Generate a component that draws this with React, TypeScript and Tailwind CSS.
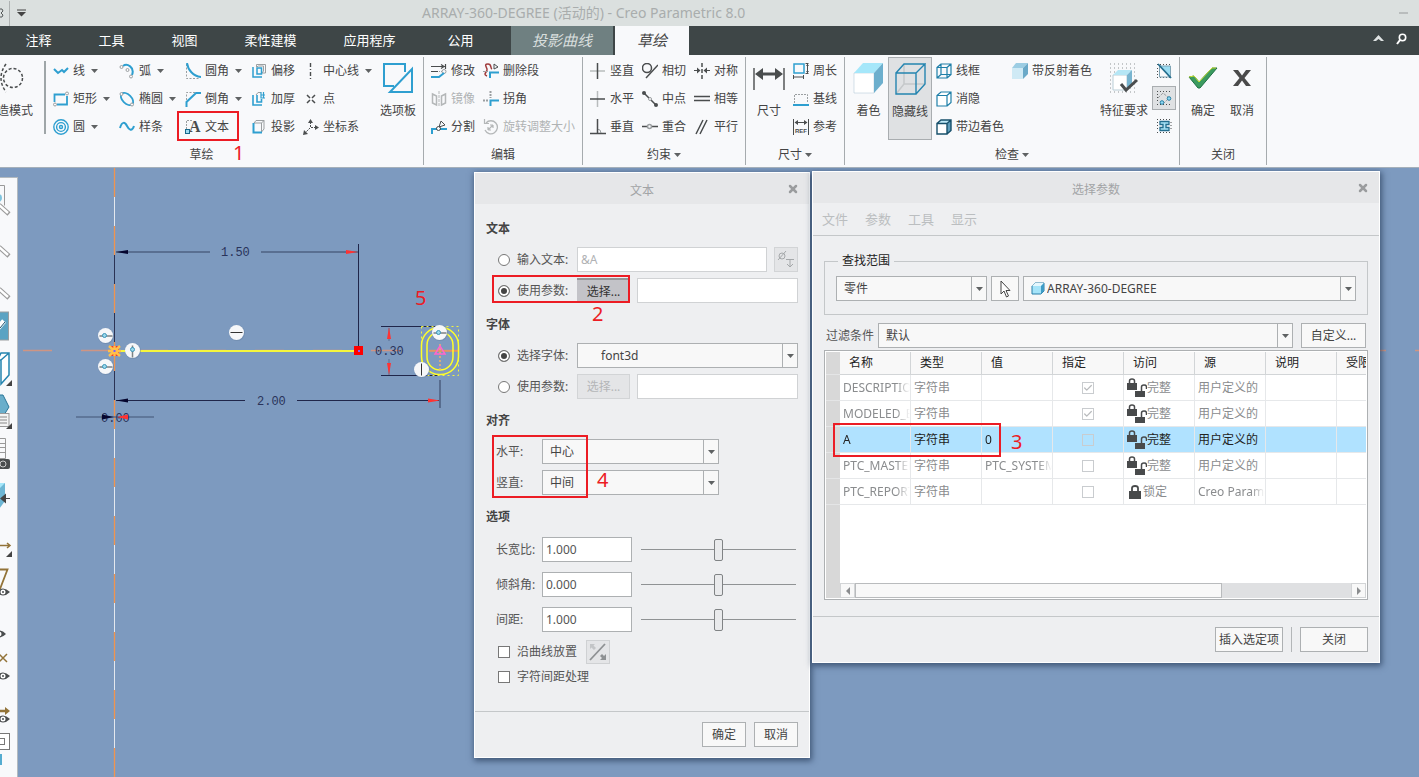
import React, { useState } from "react";
import { Check, X } from "lucide-react";

const BLUE = "#2e9fd0";
const GREY = "#9b9fa1";
const DARK = "#4a4d4e";

type IconProps = { children: React.ReactNode; w?: number; h?: number };

function Svg({ children, w = 16, h = 16 }: IconProps) {
  return (
    <svg width={w} height={h} viewBox={`0 0 ${w} ${h}`} fill="none" className="shrink-0" aria-hidden="true">
      {children}
    </svg>
  );
}

function Caret() {
  return (
    <svg width="7" height="4" viewBox="0 0 7 4" className="shrink-0" aria-hidden="true">
      <path d="M0 0h7L3.500 4z" fill="#5f6263" />
    </svg>
  );
}

/* ---------- ribbon icons ---------- */

const ICONS: Record<string, React.ReactNode> = {
  line: <path d="M1 6l4 4 4-3 2 2 4-4" stroke={BLUE} strokeWidth="2" />,
  rect: (
    <>
      <path d="M1.500 11V3.500H12M14 5v8.500H4" stroke={BLUE} strokeWidth="1.800" />
      <circle cx="14" cy="2.500" r="1.500" stroke={GREY} />
      <circle cx="2" cy="13.500" r="1.500" stroke={GREY} />
    </>
  ),
  circle: (
    <>
      <circle cx="8" cy="8" r="7.200" stroke={BLUE} strokeWidth="1.400" />
      <circle cx="8" cy="8" r="4.400" stroke={BLUE} strokeWidth="1.400" />
      <circle cx="8" cy="8" r="1.500" stroke={BLUE} strokeWidth="1.400" />
    </>
  ),
  arc: (
    <>
      <path d="M4 3C8 0 16 4 13 12" stroke={BLUE} strokeWidth="2" />
      <circle cx="2.500" cy="4" r="1.500" stroke={GREY} />
      <circle cx="8.500" cy="7" r="1.500" stroke={GREY} />
      <circle cx="12" cy="13.500" r="1.500" stroke={GREY} />
    </>
  ),
  ellipse: (
    <>
      <ellipse cx="8" cy="8" rx="7.500" ry="4.500" transform="rotate(45 8 8)" stroke={BLUE} strokeWidth="1.800" />
      <circle cx="2.500" cy="3" r="1.500" stroke={GREY} fill="#f8f9fb" />
      <circle cx="13" cy="13.500" r="1.500" stroke={GREY} fill="#f8f9fb" />
    </>
  ),
  spline: <path d="M1 9c2-7 5-6 7-2s5 6 7 0" stroke={BLUE} strokeWidth="2" />,
  fillet: (
    <>
      <path d="M1.500 1v14.500H15" stroke={GREY} strokeDasharray="2 1.500" />
      <path d="M2 0c1 7 6 13 14 14" stroke={BLUE} strokeWidth="2" />
    </>
  ),
  chamfer: (
    <>
      <path d="M1.500 9V1.500H10" stroke={GREY} strokeDasharray="2 1.500" />
      <path d="M16 2h-5l-9.500 9v5" stroke={BLUE} strokeWidth="2" />
    </>
  ),
  text: (
    <>
      <path d="M1.500 10V1.500H7" stroke={GREY} strokeDasharray="2 1" />
      <text x="4" y="13" fontFamily="Liberation Serif, serif" fontWeight="bold" fontSize="16" fill={DARK}>
        A
      </text>
      <rect x="0.500" y="10.500" width="4" height="4" fill="#9fdcf2" stroke="#17698c" />
    </>
  ),
  offset: (
    <>
      <path d="M5.500 4V1.500h9V10H11" stroke={GREY} />
      <path d="M5.500 4l2-1h5v5l-1.500 2" stroke={GREY} />
      <path d="M2 4v10h9M6 5v6h4.500V5z" stroke={BLUE} strokeWidth="1.500" />
    </>
  ),
  thicken: (
    <>
      <path d="M5 4l2-2.500h3" stroke={GREY} />
      <path d="M2 4v10h9M6 4v7h4.500V8" stroke={BLUE} strokeWidth="1.600" />
      <path d="M10 1v6h4M10 4h4M12.500 1v6" stroke={BLUE} strokeWidth="1.200" />
    </>
  ),
  project: (
    <>
      <path d="M3 4l2-2.500h8V10l-2.500 3M3 4h7.500v9M10.500 4L13 1.500" stroke={GREY} />
      <path d="M2.500 4v9.500H11" stroke={BLUE} strokeWidth="2" />
    </>
  ),
  centerline: <path d="M7.500 0v16" stroke={DARK} strokeWidth="1.400" strokeDasharray="4 2 1 2" />,
  point: <path d="M4 4l3 3M12 4L9 7M4 12l3-3M12 12L9 9" stroke={DARK} strokeWidth="1.500" />,
  csys: (
    <>
      <path d="M7.500 3v6M8 8.500h5M7 9l-4 4" stroke={DARK} strokeDasharray="2 1" />
      <path d="M5 4l2.500-4L10 4zM12 6l4 2.500L12 11zM0 16l1-5 4 4z" fill={DARK} />
    </>
  ),
  modify: (
    <>
      <path d="M0 3.500h15M14.500 1v5M10 1.500l3 2-3 2M0 8.500h7" stroke={DARK} strokeWidth="1.200" />
      <path d="M8 8.500h3" stroke={GREY} strokeDasharray="1 1" />
      <circle cx="13" cy="8.500" r="2" stroke={GREY} />
      <path d="M0 14h8l5-4" stroke={BLUE} strokeWidth="2" />
    </>
  ),
  deleteSeg: (
    <>
      <path d="M4 13c-5-2 1-4 0-7s-3-5 1-5 2 4 4 5" stroke="#a03c3c" strokeWidth="1.500" />
      <path d="M11 1l4 3-4 2z" stroke={DARK} />
      <path d="M6.500 10v6M0 8.500h5" stroke={GREY} strokeDasharray="2 1" />
      <path d="M7 15V9.500h9" stroke={BLUE} strokeWidth="2" />
    </>
  ),
  mirror: (
    <>
      <path d="M8 0v16" stroke="#b4b7b8" strokeDasharray="3 1" />
      <path d="M1.500 3l4 2v9l-4-2zM14.500 3l-4 2v9l4-2z" stroke="#b4b7b8" strokeWidth="1.500" />
    </>
  ),
  corner: (
    <>
      <path d="M7.500 0v7M0 9.500h6" stroke={GREY} strokeWidth="2" strokeDasharray="2 1" />
      <path d="M7.500 15V9.500H16" stroke={BLUE} strokeWidth="2" />
    </>
  ),
  divide: (
    <>
      <path d="M1 15v-5h5M9 10h7" stroke={BLUE} strokeWidth="2" />
      <circle cx="7.500" cy="9.500" r="2" stroke={DARK} />
      <path d="M8 8l2-6 4 4z" stroke={DARK} />
    </>
  ),
  rotate: (
    <>
      <path d="M3 4a6.500 6.500 0 1 1-1 7" stroke="#b4b7b8" strokeWidth="1.300" />
      <path d="M5 11l5-5M10 6H7M10 6v3M5 11V8M5 11h3M1.500 0v4.500H6" stroke="#b4b7b8" strokeWidth="1.200" />
    </>
  ),
  vertical: (
    <>
      <path d="M0 8h15" stroke="#b9bcbd" strokeWidth="1.500" />
      <path d="M7.500 0v16" stroke={DARK} strokeWidth="1.500" />
    </>
  ),
  horizontal: (
    <>
      <path d="M7.500 0v16" stroke="#b9bcbd" strokeWidth="1.500" />
      <path d="M0 8h15" stroke={DARK} strokeWidth="1.500" />
    </>
  ),
  perpendicular: (
    <>
      <path d="M11 14a4 4 0 0 0-4-4" stroke={GREY} />
      <path d="M7.500 0v14M0 14.500h16" stroke={DARK} strokeWidth="1.500" />
    </>
  ),
  tangent: (
    <>
      <circle cx="5" cy="5" r="4.500" stroke={DARK} strokeWidth="1.500" />
      <path d="M4 15L16 2" stroke={DARK} strokeWidth="1.500" />
    </>
  ),
  midpoint: (
    <>
      <path d="M2 2l12 12" stroke={DARK} strokeWidth="1.500" />
      <circle cx="2" cy="2" r="2" fill={DARK} />
      <circle cx="14" cy="14" r="2" fill={DARK} />
      <circle cx="8" cy="8" r="1.500" fill="#fff" stroke={GREY} />
    </>
  ),
  coincident: (
    <>
      <path d="M0 7.500h5M10 7.500h6" stroke={DARK} strokeWidth="1.500" />
      <circle cx="7.500" cy="7.500" r="2" stroke={GREY} strokeWidth="1.500" />
    </>
  ),
  symmetric: (
    <>
      <path d="M8 0v16" stroke={DARK} strokeWidth="1.500" strokeDasharray="4 2" />
      <path d="M0 7.500h4M12 7.500h4" stroke={DARK} />
      <path d="M3 4.500l3.500 3-3.500 3zM13 4.500l-3.500 3 3.500 3z" fill={DARK} />
    </>
  ),
  equal: <path d="M0 5.500h16M0 9.500h16" stroke={DARK} strokeWidth="1.500" />,
  parallel: <path d="M2 15L9 1M6 15l7-14" stroke={DARK} strokeWidth="1.500" />,
  perimeter: (
    <>
      <rect x="1" y="1" width="10" height="9" stroke={BLUE} strokeWidth="1.500" />
      <path d="M14.500 1v9M12.500 0.500h3M12.500 10.500h3M0.500 12v4M10.500 12v4M1 14h9" stroke={DARK} />
      <path d="M13 3l1.500-2L16 3zM13 8l1.500 2L16 8z" fill={DARK} />
    </>
  ),
  baseline: (
    <>
      <path d="M1.500 12V3.500h13V12" stroke={GREY} strokeDasharray="2 1" />
      <path d="M0 14h16" stroke={BLUE} strokeWidth="2" />
    </>
  ),
  reference: (
    <>
      <path d="M0.500 0v16M15.500 0v16M2 3.500h12" stroke={DARK} />
      <path d="M5 1L1.500 3.500 5 6zM11 1l3.500 2.500L11 6z" fill={DARK} />
      <text x="2" y="14" fontFamily="Liberation Sans, sans-serif" fontWeight="bold" fontSize="6" fill={DARK}>
        REF
      </text>
    </>
  ),
  wireframe: (
    <path d="M1 4.500h10V15H1zM5 1h10v10.500H5zM1 4.500L5 1M11 4.500L15 1M11 15l4-3.500M1 15l4-3.500" stroke="#1f7fa8" strokeWidth="1.200" />
  ),
  noHidden: (
    <path d="M1 4.500h10V15H1zM1 4.500L5 1h10v10.500L11 15M11 4.500L15 1" stroke="#1f7fa8" strokeWidth="1.200" fill="#fff" />
  ),
  shadedEdges: (
    <>
      <path d="M1 4.500h10V15H1z" fill="#fff" />
      <path d="M11 4.500L15 1v10.500L11 15z" fill="#5f9dbb" />
      <path d="M1 4.500L5 1h10l-4 3.500z" fill="#bfe9f7" />
      <path d="M1 4.500h10V15H1zM1 4.500L5 1h10v10.500L11 15M11 4.500L15 1" stroke="#17506b" strokeWidth="1.400" />
    </>
  ),
  reflect: (
    <>
      <path d="M0 5h11v11H0z" fill="#cfeaf5" />
      <path d="M0 5l4-5h12l-5 5z" fill="#9ccde3" />
      <path d="M11 5l5-5v11l-5 5z" fill="#6aa9c8" />
    </>
  ),
};

type Cmd = { icon: string; label: string; menu?: boolean; off?: boolean };

function RibbonButton({ icon, label, menu, off }: Cmd) {
  return (
    <button
      type="button"
      disabled={off}
      className="flex h-[27px] items-center whitespace-nowrap text-xs text-[#444] disabled:text-[#b0b3b4]"
    >
      <Svg>{ICONS[icon]}</Svg>
      <span className="ml-1">{label}</span>
      {menu && (
        <span className="ml-1.5">
          <Caret />
        </span>
      )}
    </button>
  );
}

function Column({ items, className = "w-[52px]" }: { items: Cmd[]; className?: string }) {
  return (
    <div className={`flex shrink-0 flex-col gap-px ${className}`}>
      {items.map((c) => (
        <RibbonButton key={c.label} {...c} />
      ))}
    </div>
  );
}

function BigButton({ label, children, className = "" }: { label: string; children: React.ReactNode; className?: string }) {
  return (
    <button type="button" className={`flex shrink-0 flex-col items-center whitespace-nowrap text-xs text-[#444] ${className}`}>
      <span className="flex h-[42px] items-center">{children}</span>
      <span className="leading-6">{label}</span>
    </button>
  );
}

function Group({
  title,
  menu,
  className,
  pad = "",
  footer = "",
  children,
}: {
  title: string;
  menu?: boolean;
  className: string;
  pad?: string;
  footer?: string;
  children: React.ReactNode;
}) {
  return (
    <section className={`my-0.5 flex shrink-0 flex-col border-r border-[#a6abae] ${className}`}>
      <div className={`flex h-[83px] ${pad}`}>{children}</div>
      <div className={`flex flex-1 items-center justify-center gap-[3px] pt-1 text-xs text-[#444] ${footer}`}>
        {title}
        {menu && <Caret />}
      </div>
    </section>
  );
}

const TABS = [
  { label: "注释", cls: "w-[73px]" },
  { label: "工具", cls: "w-[73px]" },
  { label: "视图", cls: "w-[73px]" },
  { label: "柔性建模", cls: "w-[99px]" },
  { label: "应用程序", cls: "w-[99px]" },
  { label: "公用", cls: "w-[83px] mr-[9px]" },
];

function TitleBar() {
  return (
    <header className="flex h-[26px] shrink-0 items-center bg-[#dbe0df] text-sm text-[#a9adad]">
      <Svg w={9} h={14}>
        <path d="M0 3h2l1 2-2 2 2 2-1 2H0" stroke="#55595a" />
      </Svg>
      <span className="h-[25px] w-px bg-[#aeb2b2]" />
      <button type="button" aria-label="自定义快速访问工具栏" className="ml-[7px]">
        <Svg w={9} h={8}>
          <path d="M0 1h9" stroke="#444" />
          <path d="M0 3h9L4.500 7.500z" fill="#444" />
        </Svg>
      </button>
      <h1 className="ml-[396px] whitespace-nowrap">ARRAY-360-DEGREE (活动的) - Creo Parametric 8.0</h1>
      <button type="button" aria-label="最小化" className="mr-[11px] ml-auto h-0.5 w-[9px] bg-[#b9bdbd]" />
    </header>
  );
}

function TabBar() {
  return (
    <nav className="flex h-[29px] shrink-0 items-stretch bg-[#3e4647] pl-0.5 text-[13px] text-white">
      {TABS.map((t) => (
        <button key={t.label} type="button" className={`shrink-0 ${t.cls}`}>
          {t.label}
        </button>
      ))}
      <button type="button" className="mr-0.5 w-[102px] shrink-0 bg-[#6f8081] text-[15px] text-[#d8dedd] italic">
        投影曲线
      </button>
      <button type="button" className="w-[74px] shrink-0 bg-[#f8f9fb] text-[15px] text-[#444] italic">
        草绘
      </button>
      <div className="mr-3 mb-1 ml-auto flex items-center gap-3">
        <button type="button" aria-label="折叠功能区">
          <Svg w={11} h={7}>
            <path d="M0 6l5.500-6L11 6H8L5.500 4 3 6z" fill="#dfe3e3" />
          </Svg>
        </button>
        <button type="button" aria-label="搜索">
          <Svg w={11} h={12}>
            <circle cx="6.500" cy="4.500" r="3.200" stroke="#fff" strokeWidth="1.600" />
            <path d="M4 7l-3 4" stroke="#fff" strokeWidth="2" />
          </Svg>
        </button>
      </div>
    </nav>
  );
}

function Ribbon() {
  return (
    <div className="flex h-[113px] shrink-0 overflow-hidden border-b border-[#a5b0ba] bg-[#f8f9fb]">
      <Group title="草绘" className="w-[424px]" footer="pr-5">
        <div className="flex w-[34px] shrink-0 justify-end">
          <BigButton label="构造模式">
            <Svg w={50} h={30}>
              <circle cx="29" cy="15" r="9.500" stroke={DARK} strokeWidth="1.500" strokeDasharray="3 2" />
              <path d="M22 1q-10 14 0 28" stroke={DARK} strokeWidth="1.500" strokeDasharray="3 2" />
            </Svg>
          </BigButton>
        </div>
        <span className="mt-1 mr-[7px] ml-2.5 h-[73px] w-0.5 shrink-0 bg-[#9fa6a8]" />
        <Column
          className="w-[66px]"
          items={[
            { icon: "line", label: "线", menu: true },
            { icon: "rect", label: "矩形", menu: true },
            { icon: "circle", label: "圆", menu: true },
          ]}
        />
        <Column
          className="w-[66px]"
          items={[
            { icon: "arc", label: "弧", menu: true },
            { icon: "ellipse", label: "椭圆", menu: true },
            { icon: "spline", label: "样条" },
          ]}
        />
        <Column
          className="w-[66px]"
          items={[
            { icon: "fillet", label: "圆角", menu: true },
            { icon: "chamfer", label: "倒角", menu: true },
            { icon: "text", label: "文本" },
          ]}
        />
        <Column
          items={[
            { icon: "offset", label: "偏移" },
            { icon: "thicken", label: "加厚" },
            { icon: "project", label: "投影" },
          ]}
        />
        <Column
          className="w-[77px]"
          items={[
            { icon: "centerline", label: "中心线", menu: true },
            { icon: "point", label: "点" },
            { icon: "csys", label: "坐标系" },
          ]}
        />
        <BigButton label="选项板">
          <Svg w={30} h={30}>
            <path d="M22 9V1H1v22h10M7 29h22V6z" stroke={BLUE} strokeWidth="2" />
          </Svg>
        </BigButton>
      </Group>

      <Group title="编辑" className="w-[159px]" pad="pl-[7px]">
        <Column
          items={[
            { icon: "modify", label: "修改" },
            { icon: "mirror", label: "镜像", off: true },
            { icon: "divide", label: "分割" },
          ]}
        />
        <Column
          items={[
            { icon: "deleteSeg", label: "删除段" },
            { icon: "corner", label: "拐角" },
            { icon: "rotate", label: "旋转调整大小", off: true },
          ]}
        />
      </Group>

      <Group title="约束" menu className="w-[163px]" pad="pl-[7px]">
        <Column
          items={[
            { icon: "vertical", label: "竖直" },
            { icon: "horizontal", label: "水平" },
            { icon: "perpendicular", label: "垂直" },
          ]}
        />
        <Column
          items={[
            { icon: "tangent", label: "相切" },
            { icon: "midpoint", label: "中点" },
            { icon: "coincident", label: "重合" },
          ]}
        />
        <Column
          items={[
            { icon: "symmetric", label: "对称" },
            { icon: "equal", label: "相等" },
            { icon: "parallel", label: "平行" },
          ]}
        />
      </Group>

      <Group title="尺寸" menu className="w-[99px]" pad="pl-[7px]">
        <BigButton label="尺寸" className="mr-2">
          <Svg w={32} h={26}>
            <path d="M1 3v22M31 3v22" stroke={DARK} strokeWidth="1.400" />
            <path d="M6 9h20" stroke={DARK} strokeWidth="3" />
            <path d="M2 9l8-6v12zM30 9l-8-6v12z" fill={DARK} />
          </Svg>
        </BigButton>
        <Column
          items={[
            { icon: "perimeter", label: "周长" },
            { icon: "baseline", label: "基线" },
            { icon: "reference", label: "参考" },
          ]}
        />
      </Group>

      <Group title="检查" menu className="w-[335px]" pad="pl-2">
        <BigButton label="着色">
          <Svg w={31} h={32}>
            <path d="M1 11h20v20H1z" fill="#fff" stroke="#a9c3d0" strokeWidth="0.500" />
            <path d="M1 11L10 1h20L21 11z" fill="#a5e7fa" />
            <path d="M21 11L30 1v20l-9 10z" fill="#6dafcd" />
          </Svg>
        </BigButton>
        <BigButton label="隐藏线" className="mr-1 ml-1 w-11 border border-[#a9adb0] bg-[#dfe1e3]">
          <Svg w={31} h={32}>
            <path d="M9 1v20h21M9 21l-8 10" stroke="#c5c8ca" strokeWidth="1.500" />
            <path d="M1 10h20v21H1zM1 10l8-9h21L21 10M30 1v20l-9 10" stroke="#2585b0" strokeWidth="1.400" />
          </Svg>
        </BigButton>
        <Column
          className="w-[76px]"
          items={[
            { icon: "wireframe", label: "线框" },
            { icon: "noHidden", label: "消隐" },
            { icon: "shadedEdges", label: "带边着色" },
          ]}
        />
        <Column className="w-[88px]" items={[{ icon: "reflect", label: "带反射着色" }]} />
        <BigButton label="特征要求" className="mr-1">
          <Svg w={30} h={30}>
            <path
              d="M1 1h28M1 5h28M1 9h28M1 13h28M1 17h28M1 21h28M1 25h28M1 29h28"
              stroke="#8f9496"
              strokeDasharray="1 3"
            />
            <path d="M4 12h14v15H4z" fill="#fff" stroke="#b9cdd6" />
            <path d="M4 12l5-5h14l-5 5z" fill="#b5e6f5" />
            <path d="M18 12l5-5v14l-5 6z" fill="#78b4cf" />
            <path d="M12 21l5 6L28 17" stroke="#4a4d4e" strokeWidth="3" />
          </Svg>
        </BigButton>
        <div className="flex shrink-0 flex-col items-center">
          <button type="button" aria-label="显示开放端" className="flex h-7 items-center">
            <Svg>
              <path d="M1 1.500h15M1 14.500h15M1.500 5v8" stroke={DARK} strokeDasharray="1 2" />
              <path d="M4 3l10 11V3z" fill="#9adcf2" />
              <path d="M3.500 3h11v11h-11z" stroke="#7fa4b5" />
              <path d="M2 1l13 14" stroke="#236d8e" strokeWidth="1.800" />
            </Svg>
          </button>
          <button
            type="button"
            aria-label="突出显示开放端"
            className="mt-px flex h-6 w-6 items-center justify-center border border-[#a9adb0] bg-[#dfe1e3]"
          >
            <Svg>
              <path d="M1 1.500h15M1 14.500h15M1.500 4v9" stroke={DARK} strokeDasharray="1 2" />
              <path d="M2 8l5-5 6 5-5 5" stroke={GREY} strokeDasharray="3 1" />
              <circle cx="6" cy="12.500" r="1.800" fill="#8fd8f2" stroke="#2780a5" />
              <circle cx="13" cy="8.500" r="1.800" fill="#8fd8f2" stroke="#2780a5" />
            </Svg>
          </button>
          <button type="button" aria-label="重叠几何" className="mt-0.5 flex h-7 items-center">
            <Svg>
              <path d="M1 1.500h15M1 14.500h15M1.500 4v9M15 4v9" stroke={DARK} strokeDasharray="1 2" />
              <path d="M4 3.500h9v3h-3v3h3v3H4v-3h3v-3H4z" fill="#a8e3f6" stroke="#236d8e" strokeWidth="1.300" />
            </Svg>
          </button>
        </div>
      </Group>

      <Group title="关闭" className="w-[87px]" pad="pl-2">
        <BigButton label="确定" className="mr-3">
          <Svg w={30} h={22}>
            <path d="M1 10l5-1 5 6L24 1h5L12 21h-2z" fill="#3b9b5f" stroke="#1f7045" />
            <path d="M1 10l5-1 5 6L24 1h4" stroke="#c9e234" />
          </Svg>
        </BigButton>
        <BigButton label="取消">
          <Svg w={24} h={18}>
            <path d="M3 1h5l4 5.500L16 1h5l-6.500 8L21 17h-5l-4-5.500L8 17H3l6.500-8z" fill="#4a4a4a" />
          </Svg>
        </BigButton>
      </Group>
    </div>
  );
}

/* ---------- sketch area ---------- */

function ConstraintTag({ x, y, kind }: { x: number; y: number; kind: "node" | "nodeV" | "h" | "v" }) {
  return (
    <g transform={`translate(${x} ${y})`}>
      <circle r="8" cx="0.500" cy="0.500" fill="#6a83a6" opacity="0.5" />
      <circle r="7.500" fill="#f6f7f9" />
      {kind === "h" && <path d="M-6 0H6" stroke="#333" />}
      {kind === "v" && <path d="M0-6V6" stroke="#333" />}
      {kind === "node" && (
        <>
          <path d="M-6 0.500H7" stroke="#7b8284" strokeWidth="1.500" />
          <circle r="2" cx="-1" fill="#9bd8ec" stroke="#3a94b8" />
        </>
      )}
      {kind === "nodeV" && (
        <>
          <path d="M0-5V7" stroke="#7b8284" strokeWidth="1.500" />
          <circle r="2" cy="-1" fill="#9bd8ec" stroke="#3a94b8" />
        </>
      )}
    </g>
  );
}

function Sketch() {
  return (
    <svg className="absolute inset-0 h-full w-full" aria-label="草绘图形">
      <g transform="translate(0 -168)" fill="none">
        {/* axes */}
        <path d="M114.500 168V2000" stroke="#e4e8ee" />
        <path d="M114.500 245V408" stroke="#2b3354" />
        <path d="M114.500 168V2000" stroke="#f0944f" strokeWidth="1.300" strokeDasharray="29 29" />
        <path d="M23 350.500H3000" stroke="#cf9583" strokeWidth="1.300" strokeDasharray="29 29" />

        {/* dimension 1.50 */}
        <path d="M116 252h94M261 252h97" stroke="#4d6183" strokeWidth="1.500" />
        <path d="M358.500 244v106" stroke="#20264a" />
        <path d="M116 252l12-2v4z" fill="#05052e" />
        <path d="M358 252l-12-2v4z" fill="#f33" />

        {/* dimension 2.00 */}
        <path d="M116 400.500h129M297 400.500h142" stroke="#20264a" />
        <path d="M116 400.500l12-2v4z" fill="#05052e" />
        <path d="M440 400.500l-12-2v4z" fill="#f33" />
        <path d="M440 380v28" stroke="#576c8e" strokeWidth="2" />

        {/* dimension 0.00 */}
        <path d="M76 417h78" stroke="#566b8e" strokeWidth="1.500" />

        {/* dimension 0.30 */}
        <path d="M381 326.500h58M381 375.500h58" stroke="#20264a" />
        <path d="M389 328v13M389 359v16" stroke="#5b6f92" />
        <path d="M389 327l-2 12h4zM389 375l-2-12h4z" fill="#f33" />

        <g fill="#29335a" fontFamily="Liberation Mono, monospace" fontSize="12">
          <text x="221" y="256">1.50</text>
          <text x="257" y="405">2.00</text>
          <text x="375" y="355">0.30</text>
          <text x="101" y="422">0.00</text>
        </g>
        <path d="M114 417l-12-2.500v5z" fill="#05052e" />
        <path d="M117 417l11-2.500v5z" fill="#f33" />

        {/* sketched line */}
        <path d="M115 351h243" stroke="#f6f63c" strokeWidth="2" />
        <rect x="354" y="346" width="9" height="9" fill="#f00" />
        <rect x="358" y="350" width="2" height="2" fill="#8a5cff" />

        {/* text glyph 0 */}
        <rect x="421.500" y="326.500" width="37" height="49" stroke="#f4f43c" strokeDasharray="2 3" />
        <path d="M429 351h29" stroke="#e8955c" strokeWidth="1.500" />
        <rect x="421.500" y="327.500" width="37" height="47" rx="18" stroke="#ffff28" strokeWidth="1.500" />
        <rect x="427" y="332" width="26" height="38" rx="13" stroke="#ffff28" strokeWidth="1.500" />
        <path d="M440 344v28" stroke="#f3b36a" strokeWidth="1.500" strokeDasharray="2 2" />
        <path d="M440 346l-5 8h10z" stroke="#ff66cc" strokeWidth="1.500" />

        {/* origin */}
        <rect x="111" y="346" width="8" height="10" fill="#e33" />
        <path d="M109 346l11 10M120 346l-11 10M108 351h13M114.500 346v10" stroke="#ffc04a" strokeWidth="2.500" />
        <rect x="113.500" y="350" width="2" height="2" fill="#7a5cff" />

        <ConstraintTag x={105.5} y={335.5} kind="node" />
        <ConstraintTag x={105.5} y={366.5} kind="node" />
        <ConstraintTag x={132.5} y={350.5} kind="nodeV" />
        <ConstraintTag x={236.5} y={332.5} kind="h" />
        <ConstraintTag x={439.5} y={332.5} kind="node" />
        <ConstraintTag x={421.5} y={369.5} kind="v" />
      </g>
    </svg>
  );
}

const handle = (
  <>
    <path d="M-1 22l10 9" stroke="#9a9a9a" strokeWidth="4.500" />
    <path d="M-1 22l9 8" stroke="#fff" strokeWidth="2.500" />
  </>
);
const eye = (y: number) => (
  <g transform={`translate(3 ${y})`}>
    <path d="M-7 0q7-7 14 0q-7 7-14 0" fill="#4a4d4e" />
    <circle r="2.500" fill="#fff" />
    <circle r="1" fill="#4a4d4e" />
  </g>
);
const flyout = (y: number) => <path d={`M12 ${y}V${y - 6}L6 ${y}z`} fill="#444" />;

/* each picture is drawn in a 17x42 strip, the left half lies off screen */
const SIDE_TOOLS: { label: string; art: React.ReactNode }[] = [
  {
    label: "重新调整",
    art: (
      <>
        <path d="M-1 2.500h5.500v20" stroke="#999" />
        <circle cx="-2" cy="15" r="4" fill="#7fc4de" />
        {handle}
      </>
    ),
  },
  { label: "放大", art: handle },
  { label: "缩小", art: handle },
  {
    label: "重画",
    art: (
      <>
        <rect x="-4" y="3" width="12.500" height="28" fill="#5ba3c3" stroke="#9a9ea0" />
        <path d="M-2 19L4 12" stroke="#fff" strokeWidth="5" />
        <path d="M0 19l5-6" stroke="#17506b" />
      </>
    ),
  },
  {
    label: "显示样式",
    art: (
      <>
        <path d="M-2 8L1 2h8v22L1 33V9h-3M1 9l8-7" fill="#fff" stroke="#2585b0" strokeWidth="1.500" />
        {flyout(35)}
      </>
    ),
  },
  {
    label: "已保存方向",
    art: (
      <>
        <path d="M-3 2h6l6 12-5 8h-7z" fill="#6aaecb" stroke="#2b7799" />
        <rect x="-4" y="20.500" width="13" height="13" fill="#f4f4f4" stroke="#999" />
        <path d="M0 24h7M0 27h7M0 30h7" stroke="#888" />
        {flyout(36)}
      </>
    ),
  },
  {
    label: "视图管理器",
    art: (
      <>
        <path d="M-1 3.500h6.500v20H-1M-1 8.500h6M-1 12.500h6M-1 17.500h6" stroke="#999" />
        <rect x="-3" y="24" width="13" height="10" rx="2" fill="#4a4d4e" />
        <circle cx="3" cy="29" r="3" fill="#4a4d4e" stroke="#ccc" />
      </>
    ),
  },
  {
    label: "透视图",
    art: (
      <>
        <path d="M-1 6h6v18l-6 8z" fill="#6db6d4" />
        <path d="M-1 6h6l-5 5z" fill="#a5e7fa" />
        <path d="M10 21.500H5" stroke="#444" />
        <path d="M0 21.500l6-5v10z" fill="#444" />
      </>
    ),
  },
  {
    label: "基准显示",
    art: (
      <>
        <path d="M-1 26.500h10M7 24l3 2.500L7 29" stroke="#927338" strokeWidth="1.500" />
        {flyout(38)}
      </>
    ),
  },
  {
    label: "平面显示",
    art: (
      <>
        <path d="M-1 8.500h8.500L0 28" stroke="#927338" strokeWidth="1.800" />
        {eye(31)}
      </>
    ),
  },
  { label: "轴显示", art: <g transform="translate(-4 0)">{eye(31)}</g> },
  {
    label: "点显示",
    art: (
      <>
        <path d="M-1 9l8 8M7 9l-8 8" stroke="#927338" strokeWidth="1.500" />
        {eye(31)}
      </>
    ),
  },
  {
    label: "坐标系显示",
    art: (
      <>
        <path d="M-1 24h6" stroke="#927338" strokeWidth="2.500" />
        <path d="M5 20l5 4-5 4z" fill="#927338" />
        {eye(32)}
      </>
    ),
  },
  {
    label: "注释显示",
    art: (
      <>
        <rect x="-8" y="4.500" width="17.500" height="16" fill="#fff" stroke="#777" />
        <rect x="-6" y="9.500" width="10.500" height="6" stroke="#777" />
        <rect x="-4" y="25" width="6" height="11" fill="#55acd0" />
      </>
    ),
  },
];

function SideToolbar() {
  return (
    <aside className="absolute top-[9px] bottom-0 left-0 flex w-[18px] flex-col overflow-hidden border-t border-r border-[#b3babf] bg-[#f8f9fb] pt-[5px]">
      {SIDE_TOOLS.map((t) => (
        <button key={t.label} type="button" aria-label={t.label} className="h-[42px] shrink-0">
          <Svg w={17} h={42}>
            {t.art}
          </Svg>
        </button>
      ))}
    </aside>
  );
}

/* ---------- dialog controls ---------- */

function Combo({
  label,
  id,
  options,
  className = "",
  pad = "pl-[7px]",
}: {
  label?: string;
  id?: string;
  options: string[];
  className?: string;
  pad?: string;
}) {
  return (
    <div className={`relative h-[25px] border border-[#adb0b2] bg-[#f8f8f8] ${className}`}>
      <select
        id={id}
        aria-label={label}
        className={`block h-full w-full appearance-none bg-transparent pr-5 text-xs text-[#444] outline-none ${pad}`}
      >
        {options.map((o) => (
          <option key={o}>{o}</option>
        ))}
      </select>
      <span className="pointer-events-none absolute inset-y-0 right-0 flex w-[15px] items-center justify-center border-l border-[#adb0b2]">
        <Caret />
      </span>
    </div>
  );
}

function PushButton({ children, className = "", off }: { children: React.ReactNode; className?: string; off?: boolean }) {
  return (
    <button
      type="button"
      disabled={off}
      className={`flex h-[25px] shrink-0 items-center justify-center border border-[#adb0b2] bg-[#f8f8f8] text-xs whitespace-nowrap text-[#444] disabled:border-[#d2d4d6] disabled:bg-[#e4e5e7] disabled:text-[#b4b6b8] ${className}`}
    >
      {children}
    </button>
  );
}

function Radio({ id, name, checked, onChange }: { id: string; name: string; checked: boolean; onChange: () => void }) {
  return (
    <input
      type="radio"
      id={id}
      name={name}
      checked={checked}
      onChange={onChange}
      className="h-3 w-3 shrink-0 appearance-none rounded-full border border-[#777] bg-white checked:bg-[#444] checked:shadow-[inset_0_0_0_2px_#fff]"
    />
  );
}

function DialogHeader({ title }: { title: string }) {
  return (
    <div className="relative flex h-[31px] items-center justify-center bg-[#e6e7e9] pt-1 text-xs text-[#a2a4a6]">
      <h2>{title}</h2>
      <button type="button" aria-label="关闭" className="absolute top-2.5 right-2.5">
        <X size={12} strokeWidth={5} color="#9a9c9e" />
      </button>
    </div>
  );
}

const heading = "h-5 text-xs leading-5 font-bold text-[#444]";
const textBox = "h-[25px] border border-[#d0d2d4] bg-white text-xs";

function TextDialog() {
  const [source, setSource] = useState("param");
  const [font, setFont] = useState("pick");

  const numbers = [
    { id: "ratio", label: "长宽比:", value: "1.000" },
    { id: "slant", label: "倾斜角:", value: "0.000" },
    { id: "spacing", label: "间距:", value: "1.000" },
  ];

  return (
    <div
      role="dialog"
      aria-label="文本"
      className="absolute top-1 left-[474px] w-[336px] border border-white bg-[#eeeff1] text-xs text-[#555] shadow-[1px_2px_6px_1px_rgba(30,50,80,0.65)]"
    >
      <DialogHeader title="文本" />
      <div className="px-[11px] pt-[15px]">
        <h3 className={heading}>文本</h3>
        <div className="mt-2 flex items-center pl-3">
          <Radio id="src-text" name="source" checked={source === "text"} onChange={() => setSource("text")} />
          <label htmlFor="src-text" className="w-[67px] pl-[7px]">输入文本:</label>
          <input aria-label="文本" defaultValue="&A" disabled className={`${textBox} w-[190px] pl-[3px] text-[#b0b2b4]`} />
          <PushButton off className="ml-[7px] w-[24px]">
            <Svg w={20} h={20}>
              <circle cx="6" cy="6" r="3" stroke="#a5a8aa" />
              <path d="M2 10l8-9M10 9.500h8M14 10v7M11 14l3 3 3-3" stroke="#a5a8aa" />
            </Svg>
          </PushButton>
        </div>
        <div className="mt-1.5 flex items-center pl-3">
          <Radio id="src-param" name="source" checked={source === "param"} onChange={() => setSource("param")} />
          <label htmlFor="src-param" className="w-[67px] pl-[7px]">使用参数:</label>
          <button type="button" className="h-[25px] w-[53px] border-t-2 border-[#939496] bg-[#c3c3c8] text-xs text-[#333]">
            选择...
          </button>
          <input aria-label="参数" className={`${textBox} ml-[7px] w-[161px]`} />
        </div>

        <h3 className={`${heading} mt-3`}>字体</h3>
        <div className="mt-2 flex items-center pl-3">
          <Radio id="font-pick" name="font" checked={font === "pick"} onChange={() => setFont("pick")} />
          <label htmlFor="font-pick" className="w-[67px] pl-[7px]">选择字体:</label>
          <Combo label="字体" options={["font3d"]} className="w-[221px]" pad="pl-[23px]" />
        </div>
        <div className="mt-1.5 flex items-center pl-3">
          <Radio id="font-param" name="font" checked={font === "param"} onChange={() => setFont("param")} />
          <label htmlFor="font-param" className="w-[67px] pl-[7px]">使用参数:</label>
          <PushButton off className="w-[53px]">选择...</PushButton>
          <input aria-label="字体参数" className={`${textBox} ml-[7px] w-[161px]`} />
        </div>

        <h3 className={`${heading} mt-3`}>对齐</h3>
        <div className="mt-2 flex items-center pl-2.5">
          <label htmlFor="align-h" className="w-[46px]">水平:</label>
          <Combo id="align-h" options={["中心"]} className="w-[177px]" />
        </div>
        <div className="mt-1.5 flex items-center pl-2.5">
          <label htmlFor="align-v" className="w-[46px]">竖直:</label>
          <Combo id="align-v" options={["中间"]} className="w-[177px]" />
        </div>

        <h3 className={`${heading} mt-3`}>选项</h3>
        <div className="mt-2.5 flex flex-col gap-2.5">
          {numbers.map((n) => (
            <div key={n.id} className="flex items-center pl-2.5">
              <label htmlFor={n.id} className="w-[46px]">{n.label}</label>
              <input id={n.id} defaultValue={n.value} className="h-[25px] w-[90px] border border-[#adb0b2] bg-white pl-[3px]" />
              <input
                type="range"
                aria-label={n.label}
                defaultValue={50}
                className="ml-[9px] h-[22px] w-[155px] appearance-none bg-transparent [&::-webkit-slider-runnable-track]:h-px [&::-webkit-slider-runnable-track]:bg-[#8f9294] [&::-webkit-slider-thumb]:-mt-2.5 [&::-webkit-slider-thumb]:h-[22px] [&::-webkit-slider-thumb]:w-[9px] [&::-webkit-slider-thumb]:appearance-none [&::-webkit-slider-thumb]:rounded-xs [&::-webkit-slider-thumb]:border [&::-webkit-slider-thumb]:border-[#808385] [&::-webkit-slider-thumb]:bg-[#e9eaec]"
              />
            </div>
          ))}
        </div>

        <div className="mt-2 flex h-6 items-center pl-3">
          <input id="along" type="checkbox" className="h-3 w-3 appearance-none border border-[#777] bg-white" />
          <label htmlFor="along" className="w-[76px] pl-[7px] whitespace-nowrap">沿曲线放置</label>
          <button type="button" disabled aria-label="反向" className="flex h-6 w-6 items-center justify-center border border-[#cfd1d3] bg-[#e4e5e7]">
            <Svg w={18} h={18}>
              <path d="M1 17L16 1" stroke="#8e9193" strokeWidth="1.800" />
              <path d="M1 1h5L4.500 2.500 7 5 5 7 2.500 4.500 1 6z" fill="#c3c5c7" />
              <path d="M17 17h-6l2-2-2-2 2-2 2 2 2-2z" fill="#8e9193" />
            </Svg>
          </button>
        </div>
        <div className="mt-[3px] flex h-5 items-center pl-3">
          <input id="kerning" type="checkbox" className="h-3 w-3 appearance-none border border-[#777] bg-white" />
          <label htmlFor="kerning" className="pl-[7px]">字符间距处理</label>
        </div>
      </div>
      <div className="mt-6 flex justify-end gap-2 border-t border-[#c4c7c9] px-[11px] py-2.5">
        <PushButton className="w-11">确定</PushButton>
        <PushButton className="w-11">取消</PushButton>
      </div>
    </div>
  );
}

const HEADERS = ["名称", "类型", "值", "指定", "访问", "源", "说明", "受限"];

const ROWS = [
  { name: "DESCRIPTION", value: "", mark: true, access: "完整", from: "用户定义的" },
  { name: "MODELED_BY", value: "", mark: true, access: "完整", from: "用户定义的" },
  { name: "A", value: "0", mark: false, access: "完整", from: "用户定义的" },
  { name: "PTC_MASTER", value: "PTC_SYSTEM", mark: false, access: "完整", from: "用户定义的" },
  { name: "PTC_REPORT", value: "", mark: false, access: "锁定", from: "Creo Parametric" },
];

function LockIcon({ locked }: { locked: boolean }) {
  if (locked) {
    return (
      <Svg w={16} h={14}>
        <rect x="2" y="6" width="12" height="8" fill="#484a4b" />
        <path d="M5 7V3q0-2 3-2t3 2v4" stroke="#484a4b" strokeWidth="1.800" />
      </Svg>
    );
  }
  return (
    <Svg w={20} h={20}>
      <rect x="0" y="5" width="10" height="7" fill="#484a4b" />
      <path d="M2.500 6V3q0-2 2.500-2t2.500 2v3" stroke="#484a4b" strokeWidth="1.500" />
      <rect x="8" y="13" width="10" height="6" fill="#484a4b" />
      <path d="M14.500 13V9q0-2 2.500-2t2.500 2v2" stroke="#484a4b" strokeWidth="1.500" />
    </Svg>
  );
}

const fade = "block overflow-hidden pl-[3px] [mask-image:linear-gradient(to_right,black_80%,transparent_100%)]";

function ParameterTable() {
  const [active, setActive] = useState("A");

  return (
    <div className="mt-0.5 border border-[#adb0b2] bg-white p-px">
      <div className="flex h-[246px]">
        <div className="w-3.5 shrink-0 bg-[#d8d8d8]">
          <div className="h-[23px] border-b border-[#e4e5e6]" />
          {ROWS.map((r) => (
            <div key={r.name} className="h-[26px] border-b border-[#e4e5e6]" />
          ))}
        </div>
        <div className="flex min-w-0 flex-1 flex-col overflow-hidden">
          <table className="w-[568px] table-fixed border-separate border-spacing-0 text-left text-xs">
            <thead>
              <tr className="h-[23px] bg-[#f8f8f8] text-[#222]">
                {HEADERS.map((h) => (
                  <th key={h} className="w-[71px] border-r border-b border-[#d2d5d7] p-0 pl-[9px] font-normal">
                    {h}
                  </th>
                ))}
              </tr>
            </thead>
            <tbody>
              {ROWS.map((r) => (
                <tr
                  key={r.name}
                  onClick={() => setActive(r.name)}
                  className={`h-[26px] cursor-default whitespace-nowrap [&>td]:border-r [&>td]:border-b [&>td]:border-[#e6e8ea] [&>td]:p-0 ${
                    active === r.name ? "bg-[#b0e2ff] text-[#222]" : "text-[#8a8c8e]"
                  }`}
                >
                  <td>
                    <span className={fade}>{r.name}</span>
                  </td>
                  <td className="overflow-hidden">
                    <span className="pl-[3px]">字符串</span>
                  </td>
                  <td>
                    <span className={fade}>{r.value}</span>
                  </td>
                  <td>
                    <label className="relative mx-auto block h-3 w-3">
                      <input
                        type="checkbox"
                        aria-label={`指定 ${r.name}`}
                        defaultChecked={r.mark}
                        disabled
                        className="block h-3 w-3 appearance-none border border-[#c9cccf]"
                      />
                      {r.mark && <Check size={10} strokeWidth={3} color="#b9bbbd" className="absolute top-px left-px" />}
                    </label>
                  </td>
                  <td>
                    <span className="flex items-center pl-[3px]">
                      <LockIcon locked={r.access === "锁定"} />
                      <span>{r.access}</span>
                    </span>
                  </td>
                  <td>
                    <span className={r.from.length > 6 ? fade : "pl-[3px]"}>{r.from}</span>
                  </td>
                  <td />
                  <td />
                </tr>
              ))}
            </tbody>
          </table>
          {/* horizontal scroll bar */}
          <div className="mt-auto flex h-[15px] bg-[#dfe0e2]">
            <button type="button" aria-label="向左滚动" className="flex w-[15px] items-center justify-center border border-[#d2d4d6] bg-[#f8f8f8]">
              <Svg w={4} h={8}>
                <path d="M4 0v8L0 4z" fill="#8a8c8e" />
              </Svg>
            </button>
            <div className="w-[367px] border border-[#b9bbbd] bg-[#f8f8f8]" />
            <button type="button" aria-label="向右滚动" className="ml-auto flex w-[15px] items-center justify-center border border-[#d2d4d6] bg-[#f8f8f8]">
              <Svg w={4} h={8}>
                <path d="M0 0v8l4-4z" fill="#8a8c8e" />
              </Svg>
            </button>
          </div>
        </div>
      </div>
    </div>
  );
}

function ParameterDialog() {
  return (
    <div
      role="dialog"
      aria-label="选择参数"
      className="absolute top-[3px] left-[812px] w-[568px] border border-white bg-[#eeeff1] text-xs text-[#555] shadow-[1px_2px_6px_1px_rgba(30,50,80,0.65)]"
    >
      <DialogHeader title="选择参数" />
      <div className="flex h-[33px] items-center gap-[17px] border-b border-[#c4c7c9] pt-0.5 pl-[9px] text-[13px] text-[#bbbec0]">
        {["文件", "参数", "工具", "显示"].map((m) => (
          <button key={m} type="button">{m}</button>
        ))}
      </div>
      <div className="px-[11px] pt-4 pb-4">
        <fieldset className="border border-[#c4c7c9] px-[11px] pb-[13px]">
          <legend className="ml-0.5 px-1 leading-[18px] text-[#222]">查找范围</legend>
          <div className="flex items-center gap-1 pt-1.5">
            <Combo label="查找范围" options={["零件"]} className="w-[151px]" />
            <PushButton className="h-7 w-7">
              <Svg w={12} h={18}>
                <path d="M2 1v13l3-3 2.500 6 2-1L7 10.500h4z" fill="#fff" stroke="#444" />
              </Svg>
            </PushButton>
            <div className="relative flex-1">
              <Combo label="模型" options={["ARRAY-360-DEGREE"]} pad="pl-[23px]" />
              <span className="pointer-events-none absolute top-1.5 left-2">
                <Svg w={14} h={13}>
                  <path d="M1 4l3-3h9v8l-3 3H1z" fill="#a5e4f9" stroke="#2b7fa8" />
                  <path d="M1 4l3-3h9l-3 3z" fill="#e5f7fd" />
                  <path d="M10 4l3-3v8l-3 3z" fill="#3f9cc6" />
                </Svg>
              </span>
            </div>
          </div>
        </fieldset>
        <div className="mt-2 flex items-center pr-0.5 pl-0.5">
          <label htmlFor="filter" className="w-[52px]">过滤条件</label>
          <Combo id="filter" options={["默认"]} className="flex-1" />
          <PushButton className="ml-2 w-[65px]">自定义...</PushButton>
        </div>
        <ParameterTable />
      </div>
      <div className="flex justify-end border-t border-[#c4c7c9] px-[11px] py-2.5">
        <PushButton className="w-[68px]">插入选定项</PushButton>
        <span className="mx-2 w-px bg-[#b3b6b8]" />
        <PushButton className="w-[68px]">关闭</PushButton>
      </div>
    </div>
  );
}

/* numbered red frames that walk through the steps */
function Marks() {
  const frame = "absolute border-2 border-[#ec1c24]";
  const digit = "absolute text-xl leading-5 text-[#ec1c24]";
  return (
    <div className="pointer-events-none absolute inset-0">
      <span className={`${frame} top-[111px] left-[177px] h-[30px] w-[62px]`} />
      <span className={`${digit} top-[143px] left-[233px]`}>1</span>
      <span className={`${frame} top-[275px] left-[492px] h-7 w-[138px]`} />
      <span className={`${digit} top-[304px] left-[592px]`}>2</span>
      <span className={`${frame} top-[423px] left-[833px] h-[34px] w-[168px]`} />
      <span className={`${digit} top-[432px] left-[1011px]`}>3</span>
      <span className={`${frame} top-[435px] left-[492px] h-[63px] w-24`} />
      <span className={`${digit} top-[470px] left-[597px]`}>4</span>
      <span className={`${digit} top-[288px] left-[415px]`}>5</span>
    </div>
  );
}

export default function App() {
  return (
    <div className="relative flex h-screen flex-col overflow-hidden font-['Noto_Sans','Noto_Sans_CJK_SC',sans-serif]">
      <TitleBar />
      <TabBar />
      <Ribbon />
      <main className="relative flex-1 overflow-hidden bg-[#7d9abf]">
        <Sketch />
        <SideToolbar />
        <TextDialog />
        <ParameterDialog />
      </main>
      <Marks />
    </div>
  );
}
